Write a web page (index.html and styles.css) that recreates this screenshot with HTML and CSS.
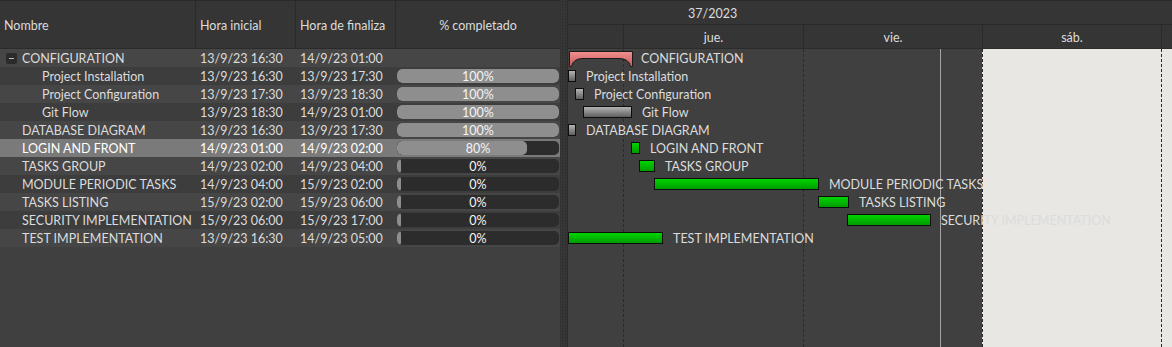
FILE: index.html
```html
<!DOCTYPE html>
<html lang="es">
<head>
    <meta charset="UTF-8">
    <title>Diagrama de Gantt</title>
    <link rel="stylesheet" href="styles.css">
</head>
<body>
    <div class="gantt">
        <div class="tree">
            <div class="tree-head">
                <div class="cell col-name">Nombre</div>
                <div class="cell col-start">Hora inicial</div>
                <div class="cell col-end">Hora de finaliza</div>
                <div class="cell col-prog center">% completado</div>
            </div>

            <div class="tree-body">
                <div class="row">
                    <div class="cell col-name"><span class="expander"></span>CONFIGURATION</div>
                    <div class="cell col-start">13/9/23 16:30</div>
                    <div class="cell col-end">14/9/23 01:00</div>
                    <div class="cell col-prog"></div>
                </div>
                <div class="row">
                    <div class="cell col-name child">Project Installation</div>
                    <div class="cell col-start">13/9/23 16:30</div>
                    <div class="cell col-end">13/9/23 17:30</div>
                    <div class="cell col-prog"><div class="progress"><div class="fill" style="width: 100%"></div><span>100%</span></div></div>
                </div>
                <div class="row">
                    <div class="cell col-name child">Project Configuration</div>
                    <div class="cell col-start">13/9/23 17:30</div>
                    <div class="cell col-end">13/9/23 18:30</div>
                    <div class="cell col-prog"><div class="progress"><div class="fill" style="width: 100%"></div><span>100%</span></div></div>
                </div>
                <div class="row">
                    <div class="cell col-name child">Git Flow</div>
                    <div class="cell col-start">13/9/23 18:30</div>
                    <div class="cell col-end">14/9/23 01:00</div>
                    <div class="cell col-prog"><div class="progress"><div class="fill" style="width: 100%"></div><span>100%</span></div></div>
                </div>
                <div class="row">
                    <div class="cell col-name">DATABASE DIAGRAM</div>
                    <div class="cell col-start">13/9/23 16:30</div>
                    <div class="cell col-end">13/9/23 17:30</div>
                    <div class="cell col-prog"><div class="progress"><div class="fill" style="width: 100%"></div><span>100%</span></div></div>
                </div>
                <div class="row selected">
                    <div class="cell col-name">LOGIN AND FRONT</div>
                    <div class="cell col-start">14/9/23 01:00</div>
                    <div class="cell col-end">14/9/23 02:00</div>
                    <div class="cell col-prog"><div class="progress"><div class="fill" style="width: 80%"></div><span>80%</span></div></div>
                </div>
                <div class="row">
                    <div class="cell col-name">TASKS GROUP</div>
                    <div class="cell col-start">14/9/23 02:00</div>
                    <div class="cell col-end">14/9/23 04:00</div>
                    <div class="cell col-prog"><div class="progress"><div class="fill" style="width: 0%"></div><span>0%</span></div></div>
                </div>
                <div class="row">
                    <div class="cell col-name">MODULE PERIODIC TASKS</div>
                    <div class="cell col-start">14/9/23 04:00</div>
                    <div class="cell col-end">15/9/23 02:00</div>
                    <div class="cell col-prog"><div class="progress"><div class="fill" style="width: 0%"></div><span>0%</span></div></div>
                </div>
                <div class="row">
                    <div class="cell col-name">TASKS LISTING</div>
                    <div class="cell col-start">15/9/23 02:00</div>
                    <div class="cell col-end">15/9/23 06:00</div>
                    <div class="cell col-prog"><div class="progress"><div class="fill" style="width: 0%"></div><span>0%</span></div></div>
                </div>
                <div class="row">
                    <div class="cell col-name">SECURITY IMPLEMENTATION</div>
                    <div class="cell col-start">15/9/23 06:00</div>
                    <div class="cell col-end">15/9/23 17:00</div>
                    <div class="cell col-prog"><div class="progress"><div class="fill" style="width: 0%"></div><span>0%</span></div></div>
                </div>
                <div class="row">
                    <div class="cell col-name">TEST IMPLEMENTATION</div>
                    <div class="cell col-start">13/9/23 16:30</div>
                    <div class="cell col-end">14/9/23 05:00</div>
                    <div class="cell col-prog"><div class="progress"><div class="fill" style="width: 0%"></div><span>0%</span></div></div>
                </div>
            </div>
        </div>

        <div class="splitter"></div>

        <div class="chart">
            <div class="chart-head">
                <div class="scale-week"><span>37/2023</span></div>
                <div class="scale-days">
                    <div class="day first"></div>
                    <div class="day d180">jue.</div>
                    <div class="day d179">vie.</div>
                    <div class="day d179">sáb.</div>
                    <div class="day rest"></div>
                </div>
            </div>

            <div class="chart-body">
                <div class="grid">
                    <div class="col first"></div>
                    <div class="col d180"></div>
                    <div class="col d179"></div>
                    <div class="col d179 weekend"></div>
                    <div class="col rest weekend"></div>
                </div>
                <div class="now" style="left: 372px"></div>

                <!-- left/width from start and end hours (7.48px per hour) -->
                <div class="lane">
                    <div class="task" style="left: 1px">
                        <svg class="summary" width="64" height="16" viewBox="0 0 64 16">
                            <defs>
                                <linearGradient id="red" x1="0" y1="0" x2="0" y2="1">
                                    <stop offset="0" stop-color="#f29090"/>
                                    <stop offset="1" stop-color="#c85858"/>
                                </linearGradient>
                            </defs>
                            <path d="M0.5 0.5 H63.5 V15.5 H61.5 Q60 7.5 50 7.5 H14 Q4 7.5 2.5 15.5 H0.5 Z" fill="url(#red)" stroke="#1a1a1a" stroke-width="1"/>
                        </svg>
                        <span class="label">CONFIGURATION</span>
                    </div>
                </div>
                <div class="lane"><div class="task" style="left: 0px"><div class="bar done" style="width: 8px"></div><span class="label">Project Installation</span></div></div>
                <div class="lane"><div class="task" style="left: 7px"><div class="bar done" style="width: 9px"></div><span class="label">Project Configuration</span></div></div>
                <div class="lane"><div class="task" style="left: 15px"><div class="bar done" style="width: 49px"></div><span class="label">Git Flow</span></div></div>
                <div class="lane"><div class="task" style="left: 0px"><div class="bar done" style="width: 8px"></div><span class="label">DATABASE DIAGRAM</span></div></div>
                <div class="lane"><div class="task" style="left: 63px"><div class="bar" style="width: 9px"></div><span class="label">LOGIN AND FRONT</span></div></div>
                <div class="lane"><div class="task" style="left: 71px"><div class="bar" style="width: 16px"></div><span class="label">TASKS GROUP</span></div></div>
                <div class="lane"><div class="task" style="left: 86px"><div class="bar" style="width: 165px"></div><span class="label">MODULE PERIODIC TASKS</span></div></div>
                <div class="lane"><div class="task" style="left: 250px"><div class="bar" style="width: 31px"></div><span class="label">TASKS LISTING</span></div></div>
                <div class="lane"><div class="task" style="left: 279px"><div class="bar" style="width: 84px"></div><span class="label">SECURITY IMPLEMENTATION</span></div></div>
                <div class="lane"><div class="task" style="left: 0px"><div class="bar" style="width: 95px"></div><span class="label">TEST IMPLEMENTATION</span></div></div>
            </div>
        </div>
    </div>
</body>
</html>
```

FILE: styles.css
```css
html, body {
    margin: 0;
    height: 100%;
}
body {
    font-family: Lato, "Noto Sans", sans-serif;
    font-size: 12.5px;
    color: #dcdcdc;
    background: #404040;
    overflow: hidden;
}
.gantt {
    display: flex;
    height: 100vh;
}

/* ---- tree ---- */
.tree {
    width: 560px;
    flex: none;
    display: flex;
    flex-direction: column;
}
.tree-head {
    display: flex;
    height: 49px;
    box-sizing: border-box;
    background: #353535;
    border-top: 1px solid #2a2a2a;
    border-bottom: 1px solid #2b2b2b;
}
.tree-head .cell {
    display: flex;
    align-items: center;
    border-right: 1px solid #2a2a2a;
    box-sizing: border-box;
    padding-left: 4px;
    padding-top: 2px;
}
.tree-head .center {
    justify-content: center;
    padding-left: 0;
    border-right: none;
}
.cell {
    white-space: nowrap;
    overflow: hidden;
    box-sizing: border-box;
}
.col-name { width: 196px; }
.col-start { width: 100px; }
.col-end { width: 100px; }
.col-prog { width: 164px; }

.row {
    display: flex;
    height: 18px;
    line-height: 20px;
}
.row:nth-child(odd) { background: #464646; }
.row:nth-child(even) { background: #3d3d3d; }
.row.selected {
    background: #7a7a7a;
    color: #fff;
}
.row .cell { padding-left: 4px; }
.row .col-name { padding-left: 22px; position: relative; }
.row .col-name.child { padding-left: 42px; }
.row .col-prog { padding: 2px 1px 2px 1px; }

.expander {
    position: absolute;
    left: 6px;
    top: 4px;
    width: 11px;
    height: 11px;
    background: #2b2b2b;
    border-radius: 2px;
}
.expander::after {
    content: "";
    position: absolute;
    left: 3px;
    top: 5px;
    width: 5px;
    height: 1px;
    background: #bdbdbd;
}

.progress {
    position: relative;
    height: 14px;
    background: #2c2c2c;
    border-radius: 5px;
    overflow: hidden;
}
.progress .fill {
    height: 100%;
    min-width: 4px;
    background: #8e8e8e;
    border-radius: 5px;
}
.progress span {
    position: absolute;
    inset: 0;
    text-align: center;
    line-height: 15px;
    color: #f4f4f4;
}

/* ---- splitter ---- */
.splitter {
    width: 8px;
    flex: none;
    background-color: #363636;
    background-image: radial-gradient(circle, #2a2a2a 0.8px, transparent 1px);
    background-size: 3px 3px;
    border-left: 1px solid #333;
    border-right: 1px solid #2c2c2c;
    box-sizing: border-box;
}

/* ---- chart ---- */
.chart {
    flex: 1;
    display: flex;
    flex-direction: column;
    overflow: hidden;
}
.chart-head {
    background: #353535;
    border-top: 1px solid #2a2a2a;
}
.scale-week {
    height: 23px;
    line-height: 25px;
    overflow: hidden;
    border-bottom: 1px solid #2a2a2a;
    padding-left: 120px;
    white-space: nowrap;
}
.scale-days {
    display: flex;
    height: 23px;
    border-bottom: 1px solid #2b2b2b;
    white-space: nowrap;
}
.day {
    flex: none;
    text-align: center;
    box-sizing: border-box;
    padding-top: 3px;
    line-height: 20px;
    border-left: 1px solid #2a2a2a;
}
.first { width: 55px; flex: none; }
.day.first { border-left: none; }
.d180 { width: 180px; flex: none; }
.d179 { width: 179px; flex: none; }
.rest { width: 179px; flex: none; }

.chart-body {
    position: relative;
    flex: 1;
}
.grid {
    position: absolute;
    inset: 0;
    display: flex;
}
.grid .col {
    box-sizing: border-box;
    border-left: 1px dashed #2a2a2a;
}
.grid .col.first { border-left: none; }
.grid .weekend { background: #e8e7e3; }

.now {
    position: absolute;
    top: 0;
    bottom: 0;
    width: 1px;
    background: #a3a3a3;
}

.lane {
    position: relative;
    height: 18px;
}
.task {
    position: absolute;
    top: 0;
    height: 18px;
    display: flex;
    align-items: center;
    white-space: nowrap;
}
.summary {
    display: block;
    margin-top: 2px;
    align-self: flex-start;
}
.task .label {
    margin-left: 10px;
    line-height: 18px;
    padding-top: 2px;
}
.task .summary + .label { margin-left: 8px; }
.bar {
    height: 12px;
    box-sizing: border-box;
    border: 1px solid #0c0c0c;
    background: linear-gradient(#00d400, #009c00);
}
.bar.done {
    background: linear-gradient(#b4b4b4, #5e5e5e);
}
```
